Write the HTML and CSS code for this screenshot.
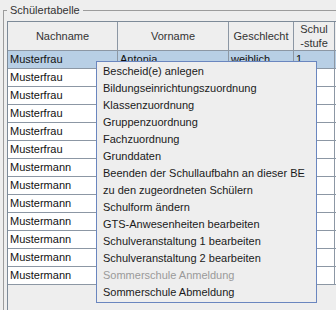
FILE: index.html
```html
<!DOCTYPE html>
<html lang="de">
<head>
<meta charset="utf-8">
<link rel="stylesheet" href="styles.css">
</head>
<body>
<fieldset class="panel">
  <legend class="title">Schülertabelle</legend>
  <div class="pane">
    <table class="grid">
      <thead>
        <tr>
          <th class="c1">Nachname</th>
          <th class="c2">Vorname</th>
          <th class="c3">Geschlecht</th>
          <th class="c4">Schul<br>-stufe</th>
          <th class="c5"></th>
        </tr>
      </thead>
      <tbody>
        <tr class="sel"><td>Musterfrau</td><td>Antonia</td><td>weiblich</td><td>1</td><td></td></tr>
        <tr><td>Musterfrau</td><td></td><td></td><td></td><td></td></tr>
        <tr><td>Musterfrau</td><td></td><td></td><td></td><td></td></tr>
        <tr><td>Musterfrau</td><td></td><td></td><td></td><td></td></tr>
        <tr><td>Musterfrau</td><td></td><td></td><td></td><td></td></tr>
        <tr><td>Musterfrau</td><td></td><td></td><td></td><td></td></tr>
        <tr><td>Mustermann</td><td></td><td></td><td></td><td></td></tr>
        <tr><td>Mustermann</td><td></td><td></td><td></td><td></td></tr>
        <tr><td>Mustermann</td><td></td><td></td><td></td><td></td></tr>
        <tr><td>Mustermann</td><td></td><td></td><td></td><td></td></tr>
        <tr><td>Mustermann</td><td></td><td></td><td></td><td></td></tr>
        <tr><td>Mustermann</td><td></td><td></td><td></td><td></td></tr>
        <tr><td>Mustermann</td><td></td><td></td><td></td><td></td></tr>
      </tbody>
    </table>
  </div>
</fieldset>
<div class="menu">
  <div class="item">Bescheid(e) anlegen</div>
  <div class="item">Bildungseinrichtungszuordnung</div>
  <div class="item">Klassenzuordnung</div>
  <div class="item">Gruppenzuordnung</div>
  <div class="item">Fachzuordnung</div>
  <div class="item">Grunddaten</div>
  <div class="item">Beenden der Schullaufbahn an dieser BE</div>
  <div class="item">zu den zugeordneten Schülern</div>
  <div class="item">Schulform ändern</div>
  <div class="item">GTS-Anwesenheiten bearbeiten</div>
  <div class="item">Schulveranstaltung 1 bearbeiten</div>
  <div class="item">Schulveranstaltung 2 bearbeiten</div>
  <div class="item disabled">Sommerschule Anmeldung</div>
  <div class="item">Sommerschule Abmeldung</div>
</div>
</body>
</html>
```

FILE: styles.css
```css
html, body {
  margin: 0;
  padding: 0;
}
body {
  width: 336px;
  height: 310px;
  overflow: hidden;
  background: #eeeeee;
  font-family: "Liberation Sans", Arial, sans-serif;
  font-size: 11px;
  color: #222222;
  position: relative;
}
.panel {
  margin: 3px 0 0 3px;
  padding: 4px 0 0 3px;
  border: 1px solid #9c9c9c;
  border-right: none;
  border-bottom: none;
  width: 333px;
  height: 307px;
  box-sizing: border-box;
  min-width: 0;
  overflow: hidden;
}
.title {
  padding: 0 3px 0 3px;
  line-height: 14px;
  color: #333333;
}
.pane {
  border: 1px solid #7d8a98;
  border-right: none;
  border-bottom: none;
  background: #eeeeee;
  height: 289px;
  box-sizing: border-box;
  overflow: hidden;
}
.grid {
  border-collapse: separate;
  border-spacing: 0;
  table-layout: fixed;
  width: 407px;
}
.grid th, .grid td {
  box-sizing: border-box;
  border-right: 1px solid #8c97a4;
  border-bottom: 1px solid #8c97a4;
  padding: 0 2px;
  white-space: nowrap;
  overflow: hidden;
}
.grid th {
  height: 29px;
  line-height: 14px;
  font-weight: normal;
  color: #333333;
  background: #eeeeee;
  text-align: center;
  vertical-align: middle;
}
.grid td {
  height: 18px;
  line-height: 17px;
  background: #ffffff;
  color: #111111;
  text-align: left;
}
.grid tr.sel td {
  background: #b8cfe5;
}
.c1 { width: 110px; }
.c2 { width: 111px; }
.c3 { width: 65px; }
.c4 { width: 41px; }
.c5 { width: 80px; }
.menu {
  position: absolute;
  left: 96px;
  top: 61px;
  width: 221px;
  box-sizing: border-box;
  padding: 1px 0;
  border: 1px solid #6a86bf;
  background: #eeeeee;
}
.item {
  line-height: 17px;
  height: 17px;
  padding-left: 6px;
  white-space: nowrap;
  color: #1a1a1a;
}
.item.disabled {
  color: #9a9a9a;
}
```
